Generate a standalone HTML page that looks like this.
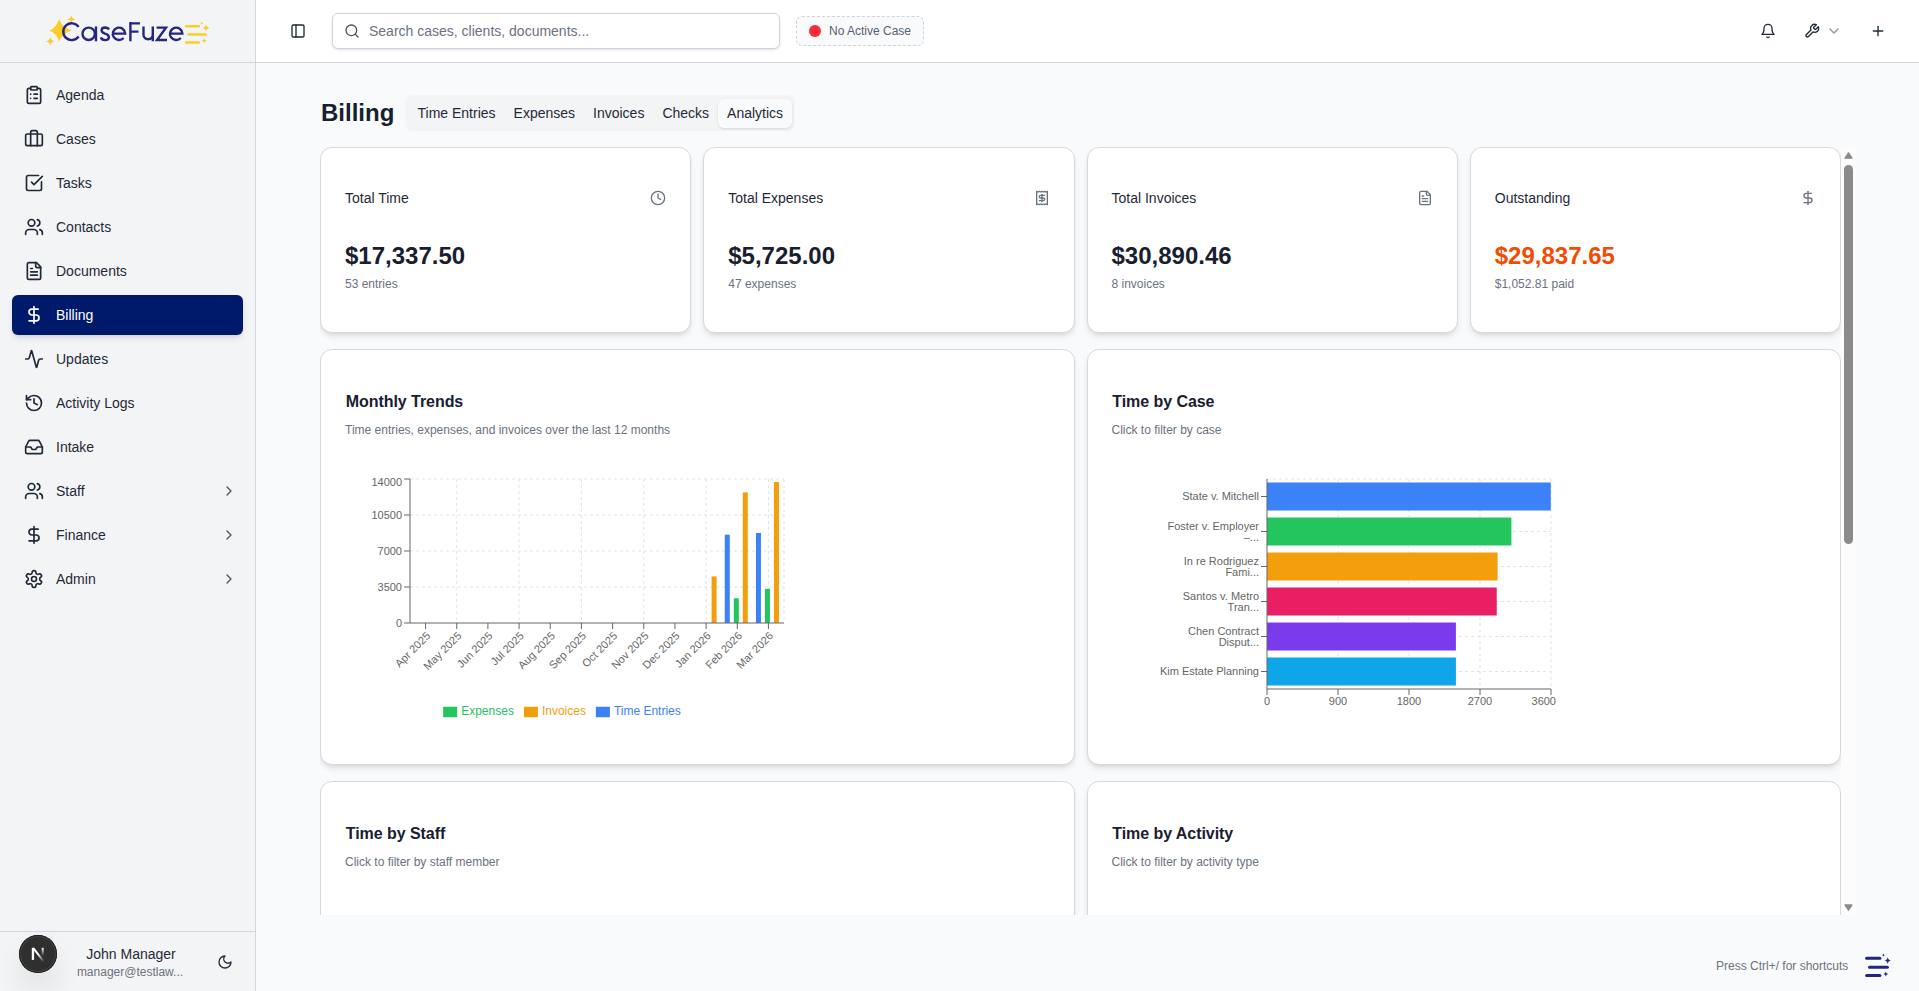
<!DOCTYPE html>
<html lang="en">
<head>
<meta charset="utf-8">
<title>CaseFuze - Billing</title>
<style>
*{box-sizing:border-box;margin:0;padding:0}
html,body{width:1919px;height:991px;overflow:hidden}
body{font-family:"Liberation Sans",sans-serif;background:#f9fafb;color:#1f2937;position:relative;font-size:14px}
svg{display:block}
.ico{fill:none;stroke:currentColor;stroke-width:2;stroke-linecap:round;stroke-linejoin:round}
#sidebar{position:absolute;left:0;top:0;width:256px;height:991px;background:#f3f4f6;border-right:1px solid #d1d5dc}
#logo{position:absolute;left:0;top:0;width:255px;height:63px;border-bottom:1px solid #d1d5dc}
.nav{position:absolute;left:12px;width:231px;height:40px;border-radius:6px;color:#1f2937}
.nav .nt{position:absolute;left:44px;top:0;line-height:40px;font-size:14px;white-space:nowrap}
.nav.active{background:#001a6b;color:#fff;box-shadow:0 4px 6px -1px rgba(0,0,0,.1),0 2px 4px -2px rgba(0,0,0,.1)}
#userbar{position:absolute;left:0;top:931px;width:255px;height:60px;border-top:1px solid #d1d5dc}
#header{position:absolute;left:256px;top:0;width:1663px;height:63px;background:#fff;border-bottom:1px solid #d1d5dc}
#search{position:absolute;left:76px;top:13px;width:448px;height:36px;border:1px solid #cfd4dc;border-radius:6px;background:#fff;box-shadow:0 1px 3px rgba(0,0,0,.1),0 1px 2px -1px rgba(0,0,0,.1)}
#search span{position:absolute;left:36px;top:0;line-height:34px;font-size:14px;color:#6b7280;white-space:nowrap}
#nocase{position:absolute;left:540px;top:16px;width:128px;height:30px;border:1px dashed #cfd4dc;border-radius:6px;background:#f9fafb}
#nocase i{position:absolute;left:12px;top:8px;width:12px;height:12px;border-radius:50%;background:#fb2c36}
#nocase span{position:absolute;left:32px;top:0;line-height:28px;font-size:12px;color:#566171;white-space:nowrap}
h1{position:absolute;left:321px;top:97px;font-size:24px;line-height:32px;font-weight:700;color:#18202f}
#tabs{position:absolute;left:405px;top:95px;height:36px;background:#f3f4f6;border-radius:8px;padding:3.5px 3px;display:flex}
#tabs span{height:29px;line-height:20px;padding:4.5px 8.5px 4.5px 9.5px;font-size:14px;color:#1f2937;white-space:nowrap;border-radius:6px}
#tabs span.sel{background:#f9fafb;box-shadow:0 1px 3px rgba(0,0,0,.1),0 1px 2px -1px rgba(0,0,0,.1)}
#scroll{position:absolute;left:320px;top:147px;width:1536px;height:768px;overflow:hidden}
.card{position:absolute;background:#fff;border:1px solid #d5d9e0;border-radius:12px;box-shadow:0 4px 6px -1px rgba(0,0,0,.1),0 2px 4px -2px rgba(0,0,0,.1)}
.card .lbl{position:absolute;left:24px;top:40px;font-size:14px;line-height:20px;color:#1f2937;white-space:nowrap}
.card .val{position:absolute;left:24px;top:92px;font-size:24px;line-height:32px;font-weight:700;color:#18202f;white-space:nowrap}
.card .sub{position:absolute;left:24px;top:128px;font-size:12px;line-height:16px;color:#6b7280;white-space:nowrap}
.card .ci{position:absolute;right:24px;top:42px;width:16px;height:16px;color:#6b7280}
.card .ttl{position:absolute;left:24.8px;letter-spacing:-0.06px;top:44px;font-size:16px;line-height:16px;font-weight:700;color:#18202f;white-space:nowrap}
.card .desc{position:absolute;left:24px;top:72px;font-size:12px;line-height:16px;color:#6b7280;white-space:nowrap}
#sbar{position:absolute;left:1521px;top:0;width:15px;height:768px;background:#fcfcfc}
#hint{position:absolute;left:1716px;top:958px;font-size:12px;line-height:16px;color:#6b7280;white-space:nowrap}
</style>
</head>
<body>
<div id="sidebar">
<div id="logo"><svg style="position:absolute;left:40px;top:8px;width:180px;height:48px" viewBox="40 8 180 48">
<path fill="#fccd2a" d="M59.2 19.1Q62 27.7 71.9 30.5Q62 33.3 59.2 41.8Q56.6 33.3 49.4 30.5Q56.6 27.7 59.2 19.1Z"/>
<path fill="#fccd2a" d="M71.4 14.9Q71.9 18.8 75.9 19.3Q71.9 19.8 71.4 23.7Q70.9 19.8 66.9 19.3Q70.9 18.8 71.4 14.9Z"/>
<path fill="#fccd2a" d="M50.3 36.8Q50.8 40.8 54.8 41.3Q50.8 41.8 50.3 45.8Q49.8 41.8 45.8 41.3Q49.8 40.8 50.3 36.8Z"/>
<g fill="none" stroke="#25277f" stroke-width="2.4">
<path d="M78.6 26.9A8.4 8.4 0 1 0 78.6 36.5"/>
<circle cx="88.7" cy="33.8" r="6.2"/><path d="M96 26.4V41.3"/>
<path d="M108.8 29.6Q108 27.5 105 27.5Q101.6 27.6 101.6 30.3Q101.6 32.6 105 33.6Q108.9 34.6 108.9 37.3Q108.8 40.1 105.2 40.1Q101.6 40.1 100.9 37.4"/>
<path d="M113.2 33.6H125.2A6.2 6.2 0 1 0 123.6 38"/>
<path d="M130.4 41.3V22.1M130.4 23.4H140M130.4 31.6H138.5"/>
<path d="M143.5 26.4V35.2A4.7 4.7 0 0 0 152.8 35.2V26.4M152.8 26.4V41.3"/>
<path d="M156.6 27.6H166L157 40H167"/>
<path d="M170.4 33.6H182.4A6.2 6.2 0 1 0 180.8 38"/>
</g>
<g stroke="#fccd2a" stroke-width="2.6" stroke-linecap="round">
<line x1="186.2" y1="26.3" x2="198.7" y2="26.3"/><line x1="188.6" y1="34.5" x2="205.7" y2="34.5"/><line x1="186.2" y1="42.5" x2="198.7" y2="42.5"/>
</g>
<path fill="#fccd2a" d="M206 24.3Q206.4 27.6 209.7 28Q206.4 28.4 206 31.7Q205.6 28.4 202.3 28Q205.6 27.6 206 24.3ZM201.8 21.6Q202 23.1 203.5 23.3Q202 23.5 201.8 25Q201.6 23.5 200.1 23.3Q201.6 23.1 201.8 21.6ZM204.2 38.1Q204.5 40.5 206.9 40.8Q204.5 41.1 204.2 43.5Q203.9 41.1 201.5 40.8Q203.9 40.5 204.2 38.1Z"/>
</svg>
</div>
<div class="nav" style="top:75px"><svg class="ico" style="position:absolute;left:12px;top:10px;width:20px;height:20px;" viewBox="0 0 24 24"><rect width="8" height="4" x="8" y="2" rx="1" ry="1"/><path d="M16 4h2a2 2 0 0 1 2 2v14a2 2 0 0 1-2 2H6a2 2 0 0 1-2-2V6a2 2 0 0 1 2-2h2"/><path d="M12 11h4"/><path d="M12 16h4"/><path d="M8 11h.01"/><path d="M8 16h.01"/></svg><span class="nt">Agenda</span></div>
<div class="nav" style="top:119px"><svg class="ico" style="position:absolute;left:12px;top:10px;width:20px;height:20px;" viewBox="0 0 24 24"><path d="M16 20V4a2 2 0 0 0-2-2h-4a2 2 0 0 0-2 2v16"/><rect width="20" height="14" x="2" y="6" rx="2"/></svg><span class="nt">Cases</span></div>
<div class="nav" style="top:163px"><svg class="ico" style="position:absolute;left:12px;top:10px;width:20px;height:20px;" viewBox="0 0 24 24"><path d="M21 10.5V19a2 2 0 0 1-2 2H5a2 2 0 0 1-2-2V5a2 2 0 0 1 2-2h12.5"/><path d="m9 11 3 3L22 4"/></svg><span class="nt">Tasks</span></div>
<div class="nav" style="top:207px"><svg class="ico" style="position:absolute;left:12px;top:10px;width:20px;height:20px;" viewBox="0 0 24 24"><path d="M16 21v-2a4 4 0 0 0-4-4H6a4 4 0 0 0-4 4v2"/><circle cx="9" cy="7" r="4"/><path d="M22 21v-2a4 4 0 0 0-3-3.87"/><path d="M16 3.13a4 4 0 0 1 0 7.75"/></svg><span class="nt">Contacts</span></div>
<div class="nav" style="top:251px"><svg class="ico" style="position:absolute;left:12px;top:10px;width:20px;height:20px;" viewBox="0 0 24 24"><path d="M15 2H6a2 2 0 0 0-2 2v16a2 2 0 0 0 2 2h12a2 2 0 0 0 2-2V7Z"/><path d="M14 2v4a2 2 0 0 0 2 2h4"/><path d="M10 9H8"/><path d="M16 13H8"/><path d="M16 17H8"/></svg><span class="nt">Documents</span></div>
<div class="nav active" style="top:295px"><svg class="ico" style="position:absolute;left:12px;top:10px;width:20px;height:20px;" viewBox="0 0 24 24"><line x1="12" x2="12" y1="2" y2="22"/><path d="M17 5H9.5a3.5 3.5 0 0 0 0 7h5a3.5 3.5 0 0 1 0 7H6"/></svg><span class="nt">Billing</span></div>
<div class="nav" style="top:339px"><svg class="ico" style="position:absolute;left:12px;top:10px;width:20px;height:20px;" viewBox="0 0 24 24"><path d="M22 12h-2.48a2 2 0 0 0-1.93 1.46l-2.35 8.36a.25.25 0 0 1-.48 0L9.24 2.18a.25.25 0 0 0-.48 0l-2.35 8.36A2 2 0 0 1 4.49 12H2"/></svg><span class="nt">Updates</span></div>
<div class="nav" style="top:383px"><svg class="ico" style="position:absolute;left:12px;top:10px;width:20px;height:20px;" viewBox="0 0 24 24"><path d="M3 12a9 9 0 1 0 9-9 9.75 9.75 0 0 0-6.74 2.74L3 8"/><path d="M3 3v5h5"/><path d="M12 7v5l4 2"/></svg><span class="nt">Activity Logs</span></div>
<div class="nav" style="top:427px"><svg class="ico" style="position:absolute;left:12px;top:10px;width:20px;height:20px;" viewBox="0 0 24 24"><polyline points="22 12 16 12 14 15 10 15 8 12 2 12"/><path d="M5.45 5.11 2 12v6a2 2 0 0 0 2 2h16a2 2 0 0 0 2-2v-6l-3.45-6.89A2 2 0 0 0 16.76 4H7.24a2 2 0 0 0-1.79 1.11z"/></svg><span class="nt">Intake</span></div>
<div class="nav" style="top:471px"><svg class="ico" style="position:absolute;left:12px;top:10px;width:20px;height:20px;" viewBox="0 0 24 24"><path d="M16 21v-2a4 4 0 0 0-4-4H6a4 4 0 0 0-4 4v2"/><circle cx="9" cy="7" r="4"/><path d="M22 21v-2a4 4 0 0 0-3-3.87"/><path d="M16 3.13a4 4 0 0 1 0 7.75"/></svg><span class="nt">Staff</span><svg class="ico" style="position:absolute;left:209px;top:12px;width:16px;height:16px;color:#4b5563;" viewBox="0 0 24 24"><path d="m9 18 6-6-6-6"/></svg></div>
<div class="nav" style="top:515px"><svg class="ico" style="position:absolute;left:12px;top:10px;width:20px;height:20px;" viewBox="0 0 24 24"><line x1="12" x2="12" y1="2" y2="22"/><path d="M17 5H9.5a3.5 3.5 0 0 0 0 7h5a3.5 3.5 0 0 1 0 7H6"/></svg><span class="nt">Finance</span><svg class="ico" style="position:absolute;left:209px;top:12px;width:16px;height:16px;color:#4b5563;" viewBox="0 0 24 24"><path d="m9 18 6-6-6-6"/></svg></div>
<div class="nav" style="top:559px"><svg class="ico" style="position:absolute;left:12px;top:10px;width:20px;height:20px;" viewBox="0 0 24 24"><path d="M12.22 2h-.44a2 2 0 0 0-2 2v.18a2 2 0 0 1-1 1.73l-.43.25a2 2 0 0 1-2 0l-.15-.08a2 2 0 0 0-2.73.73l-.22.38a2 2 0 0 0 .73 2.73l.15.1a2 2 0 0 1 1 1.72v.51a2 2 0 0 1-1 1.74l-.15.09a2 2 0 0 0-.73 2.73l.22.38a2 2 0 0 0 2.73.73l.15-.08a2 2 0 0 1 2 0l.43.25a2 2 0 0 1 1 1.73V20a2 2 0 0 0 2 2h.44a2 2 0 0 0 2-2v-.18a2 2 0 0 1 1-1.73l.43-.25a2 2 0 0 1 2 0l.15.08a2 2 0 0 0 2.73-.73l.22-.39a2 2 0 0 0-.73-2.73l-.15-.08a2 2 0 0 1-1-1.74v-.5a2 2 0 0 1 1-1.74l.15-.09a2 2 0 0 0 .73-2.73l-.22-.38a2 2 0 0 0-2.73-.73l-.15.08a2 2 0 0 1-2 0l-.43-.25a2 2 0 0 1-1-1.73V4a2 2 0 0 0-2-2z"/><circle cx="12" cy="12" r="3"/></svg><span class="nt">Admin</span><svg class="ico" style="position:absolute;left:209px;top:12px;width:16px;height:16px;color:#4b5563;" viewBox="0 0 24 24"><path d="m9 18 6-6-6-6"/></svg></div>
<div id="userbar">
<div style="position:absolute;left:19px;top:3px;width:38px;height:38px;border-radius:50%;background:#2f2f2f;box-shadow:0 0 0 1px #1c1c1c inset,0 0 0 2px rgba(255,255,255,.10) inset,0 16px 32px -8px rgba(0,0,0,.24)"></div>
<svg style="position:absolute;left:19px;top:3px;width:38px;height:38px" viewBox="0 0 38 38">
<defs><linearGradient id="g0" x1="18.5" y1="19.5" x2="24.6" y2="27" gradientUnits="userSpaceOnUse"><stop stop-color="#fff"/><stop offset="1" stop-color="#fff" stop-opacity="0"/></linearGradient>
<linearGradient id="g1" x1="0" y1="12.8" x2="0" y2="21" gradientUnits="userSpaceOnUse"><stop stop-color="#fff"/><stop offset="1" stop-color="#fff" stop-opacity="0"/></linearGradient></defs>
<path d="M12.8 12.8H15.4L25.8 26.4L24.2 27.6L15.1 15.7V24.9H12.8Z" fill="url(#g0)"/>
<rect x="22.7" y="12.8" width="2" height="8.4" fill="url(#g1)"/>
</svg>
<span style="position:absolute;left:69px;width:124px;top:12px;text-align:center;font-size:14px;line-height:20px;color:#1f2937;white-space:nowrap">John Manager</span>
<span style="position:absolute;left:69px;width:122px;top:32px;text-align:center;font-size:12px;line-height:16px;color:#6b7280;white-space:nowrap">manager@testlaw...</span>
<svg class="ico" style="position:absolute;left:217px;top:22px;width:16px;height:16px;color:#1f2937" viewBox="0 0 24 24"><path d="M12 3a6 6 0 0 0 9 9 9 9 0 1 1-9-9Z"/></svg>
</div>
</div>
<div id="header"><svg class="ico" style="position:absolute;left:34px;top:23px;width:16px;height:16px;color:#1f2937;" viewBox="0 0 24 24"><rect width="18" height="18" x="3" y="3" rx="2"/><path d="M9 3v18"/></svg><div id="search"><svg class="ico" style="position:absolute;left:11px;top:9px;width:16px;height:16px;color:#4b5563;" viewBox="0 0 24 24"><circle cx="11" cy="11" r="8"/><path d="m21 21-4.3-4.3"/></svg><span>Search cases, clients, documents...</span></div><div id="nocase"><i></i><span>No Active Case</span></div><svg class="ico" style="position:absolute;left:1504px;top:23px;width:16px;height:16px;color:#1f2937;" viewBox="0 0 24 24"><path d="M6 8a6 6 0 0 1 12 0c0 7 3 9 3 9H3s3-2 3-9"/><path d="M10.3 21a1.94 1.94 0 0 0 3.4 0"/></svg><svg class="ico" style="position:absolute;left:1548px;top:23px;width:16px;height:16px;color:#1f2937;" viewBox="0 0 24 24"><path d="M14.7 6.3a1 1 0 0 0 0 1.4l1.6 1.6a1 1 0 0 0 1.4 0l3.77-3.77a6 6 0 0 1-7.94 7.94l-6.91 6.91a2.12 2.12 0 0 1-3-3l6.91-6.91a6 6 0 0 1 7.94-7.94l-3.76 3.76z"/></svg><svg class="ico" style="position:absolute;left:1570px;top:23px;width:16px;height:16px;color:#1f2937;opacity:.5;" viewBox="0 0 24 24"><path d="m6 9 6 6 6-6"/></svg><svg class="ico" style="position:absolute;left:1614px;top:23px;width:16px;height:16px;color:#1f2937;" viewBox="0 0 24 24"><path d="M5 12h14"/><path d="M12 5v14"/></svg></div>
<h1>Billing</h1>
<div id="tabs"><span>Time Entries</span><span>Expenses</span><span>Invoices</span><span>Checks</span><span class="sel">Analytics</span></div>
<div id="scroll">
<div class="card" style="left:0px;top:0px;width:371.25px;height:186px"><span class="lbl">Total Time</span><span class="val">$17,337.50</span><span class="sub">53 entries</span><svg class="ico ci" viewBox="0 0 24 24"><circle cx="12" cy="12" r="10"/><polyline points="12 6 12 12 16 14"/></svg></div>
<div class="card" style="left:383.25px;top:0px;width:371.25px;height:186px"><span class="lbl">Total Expenses</span><span class="val">$5,725.00</span><span class="sub">47 expenses</span><svg class="ico ci" viewBox="0 0 24 24"><path d="M4 2v20l2-1 2 1 2-1 2 1 2-1 2 1 2-1 2 1V2l-2 1-2-1-2 1-2-1-2 1-2-1-2 1Z"/><path d="M16 8h-6a2 2 0 1 0 0 4h4a2 2 0 1 1 0 4H8"/><path d="M12 17.5v-11"/></svg></div>
<div class="card" style="left:766.5px;top:0px;width:371.25px;height:186px"><span class="lbl">Total Invoices</span><span class="val">$30,890.46</span><span class="sub">8 invoices</span><svg class="ico ci" viewBox="0 0 24 24"><path d="M15 2H6a2 2 0 0 0-2 2v16a2 2 0 0 0 2 2h12a2 2 0 0 0 2-2V7Z"/><path d="M14 2v4a2 2 0 0 0 2 2h4"/><path d="M10 9H8"/><path d="M16 13H8"/><path d="M16 17H8"/></svg></div>
<div class="card" style="left:1149.75px;top:0px;width:371.25px;height:186px"><span class="lbl">Outstanding</span><span class="val" style="color:#f54a00">$29,837.65</span><span class="sub">$1,052.81 paid</span><svg class="ico ci" viewBox="0 0 24 24"><line x1="12" x2="12" y1="2" y2="22"/><path d="M17 5H9.5a3.5 3.5 0 0 0 0 7h5a3.5 3.5 0 0 1 0 7H6"/></svg></div>
<div class="card" style="left:0px;top:202px;width:754.5px;height:416px"><span class="ttl">Monthly Trends</span><span class="desc">Time entries, expenses, and invoices over the last 12 months</span></div>
<div class="card" style="left:766.5px;top:202px;width:754.5px;height:416px"><span class="ttl">Time by Case</span><span class="desc">Click to filter by case</span></div>
<div class="card" style="left:0px;top:634px;width:754.5px;height:419px"><span class="ttl">Time by Staff</span><span class="desc">Click to filter by staff member</span></div>
<div class="card" style="left:766.5px;top:634px;width:754.5px;height:419px"><span class="ttl">Time by Activity</span><span class="desc">Click to filter by activity type</span></div>
<svg id="charts" style="position:absolute;left:0;top:0;width:1536px;height:768px" viewBox="320 147 1536 768" font-family="Liberation Sans, sans-serif">
<g stroke="#e0e3e8" stroke-dasharray="3 3" fill="none">
<line x1="410" y1="479" x2="784" y2="479"/>
<line x1="410" y1="515" x2="784" y2="515"/>
<line x1="410" y1="551" x2="784" y2="551"/>
<line x1="410" y1="587" x2="784" y2="587"/>
<line x1="456.750" y1="479" x2="456.750" y2="623"/>
<line x1="519.083" y1="479" x2="519.083" y2="623"/>
<line x1="581.417" y1="479" x2="581.417" y2="623"/>
<line x1="643.750" y1="479" x2="643.750" y2="623"/>
<line x1="706.083" y1="479" x2="706.083" y2="623"/>
<line x1="768.417" y1="479" x2="768.417" y2="623"/>
<line x1="784.000" y1="479" x2="784.000" y2="623"/>
</g>
<rect x="711.617" y="576.4" width="5" height="46.60" fill="#f59e0b"/>
<rect x="724.783" y="534.7" width="5" height="88.30" fill="#3b82f6"/>
<rect x="733.783" y="598.3" width="5" height="24.70" fill="#22c55e"/>
<rect x="742.783" y="492.4" width="5" height="130.60" fill="#f59e0b"/>
<rect x="755.950" y="533.0" width="5" height="90.00" fill="#3b82f6"/>
<rect x="764.950" y="588.8" width="5" height="34.20" fill="#22c55e"/>
<rect x="773.950" y="482.06" width="5" height="140.94" fill="#f59e0b"/>
<g stroke="#666" fill="none">
<line x1="410" y1="623" x2="784" y2="623"/>
<line x1="425.583" y1="623" x2="425.583" y2="629"/>
<line x1="456.750" y1="623" x2="456.750" y2="629"/>
<line x1="487.917" y1="623" x2="487.917" y2="629"/>
<line x1="519.083" y1="623" x2="519.083" y2="629"/>
<line x1="550.250" y1="623" x2="550.250" y2="629"/>
<line x1="581.417" y1="623" x2="581.417" y2="629"/>
<line x1="612.583" y1="623" x2="612.583" y2="629"/>
<line x1="643.750" y1="623" x2="643.750" y2="629"/>
<line x1="674.917" y1="623" x2="674.917" y2="629"/>
<line x1="706.083" y1="623" x2="706.083" y2="629"/>
<line x1="737.250" y1="623" x2="737.250" y2="629"/>
<line x1="768.417" y1="623" x2="768.417" y2="629"/>
<line x1="410" y1="479" x2="410" y2="623"/>
<line x1="404" y1="479" x2="410" y2="479"/>
<line x1="404" y1="515" x2="410" y2="515"/>
<line x1="404" y1="551" x2="410" y2="551"/>
<line x1="404" y1="587" x2="410" y2="587"/>
<line x1="404" y1="623" x2="410" y2="623"/>
</g>
<g fill="#666" font-size="11">
<text x="425.583" y="631" dy="0.71em" text-anchor="end" transform="rotate(-45 425.583 631)">Apr 2025</text>
<text x="456.750" y="631" dy="0.71em" text-anchor="end" transform="rotate(-45 456.750 631)">May 2025</text>
<text x="487.917" y="631" dy="0.71em" text-anchor="end" transform="rotate(-45 487.917 631)">Jun 2025</text>
<text x="519.083" y="631" dy="0.71em" text-anchor="end" transform="rotate(-45 519.083 631)">Jul 2025</text>
<text x="550.250" y="631" dy="0.71em" text-anchor="end" transform="rotate(-45 550.250 631)">Aug 2025</text>
<text x="581.417" y="631" dy="0.71em" text-anchor="end" transform="rotate(-45 581.417 631)">Sep 2025</text>
<text x="612.583" y="631" dy="0.71em" text-anchor="end" transform="rotate(-45 612.583 631)">Oct 2025</text>
<text x="643.750" y="631" dy="0.71em" text-anchor="end" transform="rotate(-45 643.750 631)">Nov 2025</text>
<text x="674.917" y="631" dy="0.71em" text-anchor="end" transform="rotate(-45 674.917 631)">Dec 2025</text>
<text x="706.083" y="631" dy="0.71em" text-anchor="end" transform="rotate(-45 706.083 631)">Jan 2026</text>
<text x="737.250" y="631" dy="0.71em" text-anchor="end" transform="rotate(-45 737.250 631)">Feb 2026</text>
<text x="768.417" y="631" dy="0.71em" text-anchor="end" transform="rotate(-45 768.417 631)">Mar 2026</text>
<text x="402" y="482" dy="0.355em" text-anchor="end">14000</text>
<text x="402" y="515" dy="0.355em" text-anchor="end">10500</text>
<text x="402" y="551" dy="0.355em" text-anchor="end">7000</text>
<text x="402" y="587" dy="0.355em" text-anchor="end">3500</text>
<text x="402" y="623" dy="0.355em" text-anchor="end">0</text>
</g>
<rect x="443.20" y="706.75" width="14" height="10.5" fill="#22c55e"/>
<text x="461.20" y="715" font-size="12" fill="#22c55e">Expenses</text>
<rect x="523.90" y="706.75" width="14" height="10.5" fill="#f59e0b"/>
<text x="541.90" y="715" font-size="12" fill="#f59e0b">Invoices</text>
<rect x="595.90" y="706.75" width="14" height="10.5" fill="#3b82f6"/>
<text x="613.90" y="715" font-size="12" fill="#3b82f6">Time Entries</text>
<g stroke="#e0e3e8" stroke-dasharray="3 3" fill="none">
<line x1="1267" y1="479" x2="1551" y2="479"/>
<line x1="1267" y1="496.5" x2="1551" y2="496.5"/>
<line x1="1267" y1="531.5" x2="1551" y2="531.5"/>
<line x1="1267" y1="566.5" x2="1551" y2="566.5"/>
<line x1="1267" y1="601.5" x2="1551" y2="601.5"/>
<line x1="1267" y1="636.5" x2="1551" y2="636.5"/>
<line x1="1267" y1="671.5" x2="1551" y2="671.5"/>
<line x1="1338" y1="479" x2="1338" y2="689"/>
<line x1="1409" y1="479" x2="1409" y2="689"/>
<line x1="1480" y1="479" x2="1480" y2="689"/>
<line x1="1551" y1="479" x2="1551" y2="689"/>
</g>
<rect x="1267" y="482.5" width="283.80" height="28" fill="#3b82f6"/>
<rect x="1267" y="517.5" width="244.40" height="28" fill="#22c55e"/>
<rect x="1267" y="552.5" width="230.60" height="28" fill="#f59e0b"/>
<rect x="1267" y="587.5" width="229.75" height="28" fill="#e91e63"/>
<rect x="1267" y="622.5" width="188.90" height="28" fill="#7c3aed"/>
<rect x="1267" y="657.5" width="188.90" height="28" fill="#0ea5e9"/>
<g stroke="#666" fill="none">
<line x1="1267" y1="689" x2="1551" y2="689"/>
<line x1="1267" y1="689" x2="1267" y2="695"/>
<line x1="1338" y1="689" x2="1338" y2="695"/>
<line x1="1409" y1="689" x2="1409" y2="695"/>
<line x1="1480" y1="689" x2="1480" y2="695"/>
<line x1="1551" y1="689" x2="1551" y2="695"/>
<line x1="1267" y1="479" x2="1267" y2="689"/>
<line x1="1261" y1="496.5" x2="1267" y2="496.5"/>
<line x1="1261" y1="531.5" x2="1267" y2="531.5"/>
<line x1="1261" y1="566.5" x2="1267" y2="566.5"/>
<line x1="1261" y1="601.5" x2="1267" y2="601.5"/>
<line x1="1261" y1="636.5" x2="1267" y2="636.5"/>
<line x1="1261" y1="671.5" x2="1267" y2="671.5"/>
</g>
<g fill="#666" font-size="11">
<text x="1267" y="697" dy="0.71em" text-anchor="middle">0</text>
<text x="1338" y="697" dy="0.71em" text-anchor="middle">900</text>
<text x="1409" y="697" dy="0.71em" text-anchor="middle">1800</text>
<text x="1480" y="697" dy="0.71em" text-anchor="middle">2700</text>
<text x="1556" y="697" dy="0.71em" text-anchor="end">3600</text>
<text x="1259" y="500.40" text-anchor="end">State v. Mitchell</text>
<text x="1259" y="529.90" text-anchor="end">Foster v. Employer</text>
<text x="1259" y="540.90" text-anchor="end">–...</text>
<text x="1259" y="564.90" text-anchor="end">In re Rodriguez</text>
<text x="1259" y="575.90" text-anchor="end">Fami...</text>
<text x="1259" y="599.90" text-anchor="end">Santos v. Metro</text>
<text x="1259" y="610.90" text-anchor="end">Tran...</text>
<text x="1259" y="634.90" text-anchor="end">Chen Contract</text>
<text x="1259" y="645.90" text-anchor="end">Disput...</text>
<text x="1259" y="675.40" text-anchor="end">Kim Estate Planning</text>
</g>
</svg>
<div id="sbar"><svg width="15" height="768" viewBox="0 0 15 768"><path d="M7.5 5.9 L11 11.2 L4 11.2 Z" fill="#8b8b8b" stroke="#8b8b8b" stroke-width="1.3" stroke-linejoin="round"/><rect x="3" y="18" width="9" height="379" rx="4.5" fill="#8b8b8b"/><path d="M7.5 763.2 L11 758 L4 758 Z" fill="#8b8b8b" stroke="#8b8b8b" stroke-width="1.3" stroke-linejoin="round"/></svg></div>
</div>
<div id="hint">Press Ctrl+/ for shortcuts</div>
<svg style="position:absolute;left:1856px;top:948px;width:40px;height:36px" viewBox="1856 948 40 36"><g stroke="#23257f" stroke-width="3" stroke-linecap="round"><line x1="1866.6" y1="958.3" x2="1879.9" y2="958.3"/><line x1="1869.5" y1="967.2" x2="1887.4" y2="967.2"/><line x1="1866.6" y1="975.4" x2="1879.9" y2="975.4"/></g><path fill="#23257f" d="M1887.70 956.90Q1888.05 960.15 1891.30 960.50Q1888.05 960.85 1887.70 964.10Q1887.35 960.85 1884.10 960.50Q1887.35 960.15 1887.70 956.90ZM1883.40 953.40Q1883.57 954.93 1885.10 955.10Q1883.57 955.27 1883.40 956.80Q1883.23 955.27 1881.70 955.10Q1883.23 954.93 1883.40 953.40ZM1885.80 971.40Q1886.04 973.65 1888.30 973.90Q1886.04 974.14 1885.80 976.40Q1885.56 974.14 1883.30 973.90Q1885.56 973.65 1885.80 971.40Z"/></svg>
</body>
</html>
